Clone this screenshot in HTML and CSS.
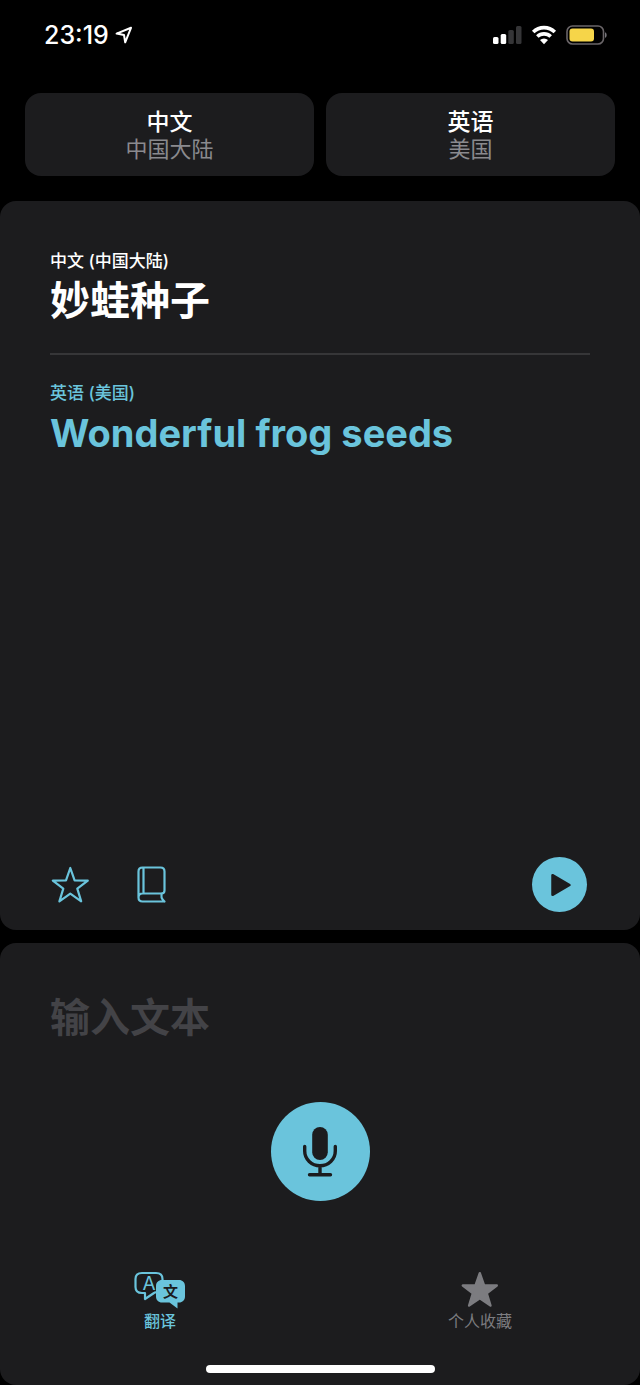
FILE: index.html
```html
<!DOCTYPE html>
<html lang="zh-CN">
<head>
<meta charset="utf-8">
<meta name="viewport" content="width=device-width, initial-scale=1">
<title>翻译</title>
<link rel="stylesheet" href="styles.css">
</head>
<body>
<div class="app">
  <header class="status">
    <div class="status-left">
      <time class="clock">23:19</time>
      <svg class="location" width="18" height="18" viewBox="0 0 18 18" aria-hidden="true"><path d="M16 1.800 1.600 7.600 9 9 10.200 16.300Z" fill="none" stroke="#fff" stroke-width="2" stroke-linejoin="round"/></svg>
    </div>
    <div class="status-right">
      <svg width="30" height="20" viewBox="0 0 30 20" aria-hidden="true">
        <rect x="1" y="12" width="5.500" height="7" rx="1.500" fill="#fff"/>
        <rect x="8.700" y="9" width="5.500" height="10" rx="1.500" fill="#fff"/>
        <rect x="16.300" y="5" width="5.500" height="14" rx="1.500" fill="#353537"/>
        <rect x="24" y="1" width="5.500" height="18" rx="1.500" fill="#353537"/>
      </svg>
      <svg width="26" height="20" viewBox="0 0 26 20" aria-hidden="true">
        <path d="M2.200 7A15.500 15.500 0 0 1 23.800 7" fill="none" stroke="#fff" stroke-width="3.600"/>
        <path d="M6.300 11.500A9.800 9.800 0 0 1 19.700 11.500" fill="none" stroke="#fff" stroke-width="3.600"/>
        <path d="M13 19.300 9 15.100A5.800 5.800 0 0 1 17 15.100Z" fill="#fff"/>
      </svg>
      <svg width="42" height="20" viewBox="0 0 42 20" aria-hidden="true">
        <rect x="1" y="1" width="36.500" height="18" rx="5.500" fill="none" stroke="#6a6568" stroke-width="1.600"/>
        <rect x="3.500" y="3.500" width="24.500" height="13" rx="3" fill="#f6d549"/>
        <path d="M39 7.200C41.200 8 41.200 12 39 12.800Z" fill="#77757a"/>
      </svg>
    </div>
  </header>

  <div class="languages">
    <button class="language" type="button"><span class="language-name">中文</span><span class="language-region">中国大陆</span></button>
    <button class="language" type="button"><span class="language-name">英语</span><span class="language-region">美国</span></button>
  </div>

  <main class="card result">
    <section>
      <p class="label">中文 (中国大陆)</p>
      <h1 class="phrase">妙蛙种子</h1>
    </section>
    <hr class="divider">
    <section class="translated">
      <p class="label">英语 (美国)</p>
      <h2 class="phrase phrase-latin" lang="en">Wonderful frog seeds</h2>
    </section>
    <div class="actions">
      <button class="icon-button" type="button" aria-label="收藏">
        <svg width="40" height="40" viewBox="0 0 40 40"><path d="M20.300 3 24.600 15.400 37.800 15.700 27.300 23.700 31.200 36.300 20.300 28.700 9.400 36.300 13.300 23.700 2.800 15.700 16 15.400Z" fill="none" stroke="currentColor" stroke-width="2.200" stroke-linejoin="round"/></svg>
      </button>
      <button class="icon-button" type="button" aria-label="词典">
        <svg width="32" height="40" viewBox="0 0 32 40"><path d="M29.500 36.500H7.500C5 36.500 3.500 35 3.500 32.500V6.500C3.500 4 5 2.500 7.500 2.500H25.500C28 2.500 29.500 4 29.500 6.500V25.500C29.500 27.500 28.500 28.500 26.500 28.500H7.500C5 28.500 3.500 29.700 3.500 32.500M8.500 2.500V28.500M27 28.500C25.800 31 26.500 34 29.500 36.500" fill="none" stroke="currentColor" stroke-width="2.200" stroke-linecap="round" stroke-linejoin="round"/></svg>
      </button>
      <button class="play" type="button" aria-label="播放">
        <svg width="24" height="26" viewBox="0 0 24 26"><path d="M4.500 3.200V22.800L21.500 13Z" fill="currentColor" stroke="currentColor" stroke-width="2.500" stroke-linejoin="round"/></svg>
      </button>
    </div>
  </main>

  <footer class="card composer">
    <input class="entry" type="text" placeholder="输入文本" aria-label="输入文本">
    <button class="mic" type="button" aria-label="语音输入">
      <svg width="40" height="52" viewBox="0 0 40 52"><rect x="12.200" y="1" width="15.600" height="33" rx="7.800" fill="currentColor"/><path d="M4.700 20.500V25A15.300 14.800 0 0 0 35.300 25V20.500M20 40V48.500M9.500 48.700H30.500" fill="none" stroke="currentColor" stroke-width="3.400" stroke-linecap="round"/></svg>
    </button>
    <nav class="tabs">
      <a class="tab tab-active" href="#translate" aria-current="page">
        <svg width="52" height="38" viewBox="0 0 52 38" aria-hidden="true">
          <path d="M22 21 20 22 11 28V22H8C4 22 1.500 20 1.500 16V8C1.500 4 4 2 8 2H22C26 2 28.500 4 28.500 8V9" fill="none" stroke="currentColor" stroke-width="2.200" stroke-linejoin="round"/>
          <text class="glyph-latin" x="15" y="19" text-anchor="middle">A</text>
          <path d="M28 9H45C48.500 9 51 11.500 51 15V25.500C51 29 48.500 31.500 45 31.500H43.500V37.500L35.500 31.500H28C24.500 31.500 22 29 22 25.500V15C22 11.500 24.500 9 28 9Z" fill="currentColor"/>
          <text class="glyph-han" x="36.500" y="26" text-anchor="middle">文</text>
        </svg>
        <span>翻译</span>
      </a>
      <a class="tab" href="#favorites">
        <svg width="40" height="38" viewBox="0 0 40 38" aria-hidden="true"><path d="M19.800 2.200 24 14.100 36.800 14.500 26.700 22.200 30.500 34.500 19.800 27.200 9.100 34.500 12.900 22.200 2.800 14.500 15.600 14.100Z" fill="currentColor" stroke="currentColor" stroke-width="2.400" stroke-linejoin="round"/></svg>
        <span>个人收藏</span>
      </a>
    </nav>
    <div class="home-bar"></div>
  </footer>
</div>
</body>
</html>
```
FILE: styles.css
```css
:root {
  --surface: #1c1c1e;
  --accent: #6ac4dc;
  --muted: #8a8a8e;
}

* {
  box-sizing: border-box;
}

body {
  margin: 0;
  background: #000;
  color: #fff;
  font-family: Inter, "Noto Sans CJK SC", sans-serif;
}

button,
input {
  margin: 0;
  padding: 0;
  border: 0;
  background: none;
  color: inherit;
  font: inherit;
}

svg {
  display: block;
}

.app {
  display: flex;
  flex-direction: column;
  min-height: 100vh;
}

.status {
  display: flex;
  justify-content: space-between;
  align-items: flex-start;
  padding: 20px 32px 43px 44px;
}

.status-left,
.status-right {
  display: flex;
  align-items: center;
  height: 30px;
}

.status-left {
  gap: 6px;
}

.status-right {
  gap: 9px;
}

.clock {
  font-size: 25px;
  font-weight: 500;
  line-height: 30px;
}

.languages {
  display: grid;
  grid-template-columns: 1fr 1fr;
  gap: 12px;
  padding: 0 25px;
}

.language {
  display: flex;
  flex-direction: column;
  align-items: center;
  padding: 15px 12px 14px;
  border-radius: 16px;
  background: var(--surface);
}

.language-name {
  font-size: 23px;
  font-weight: 500;
  line-height: 28px;
}

.language-region {
  color: var(--muted);
  font-size: 22px;
  font-weight: 400;
  line-height: 26px;
}

.card {
  display: flex;
  flex-direction: column;
  border-radius: 16px;
  background: var(--surface);
}

.result {
  flex: 1;
  margin-top: 25px;
  padding: 49px 50px 18px;
}

.label {
  margin: 0;
  font-size: 17px;
  font-weight: 500;
  line-height: 22px;
}

.phrase {
  margin: 2px 0 0;
  font-size: 40px;
  font-weight: 700;
  line-height: 54px;
}

.phrase-latin {
  font-size: 38px;
}

.divider {
  width: 100%;
  height: 2px;
  margin: 25px 0 27px;
  border: 0;
  background: #363638;
}

.translated {
  color: var(--accent);
}

.actions {
  display: flex;
  align-items: center;
  gap: 45px;
  margin-top: auto;
  padding-right: 3px;
  color: var(--accent);
}

.play {
  display: grid;
  place-items: center;
  width: 55px;
  height: 55px;
  margin-left: auto;
  border-radius: 50%;
  background: var(--accent);
  color: var(--surface);
}

.composer {
  margin-top: 13px;
  padding: 47px 0 12px;
}

.entry {
  height: 54px;
  margin: 0 50px;
  font-size: 40px;
  font-weight: 700;
  outline: 0;
}

.entry::placeholder {
  color: #434347;
  opacity: 1;
}

.mic {
  display: grid;
  place-items: center;
  align-self: center;
  width: 99px;
  height: 99px;
  margin-top: 58px;
  border-radius: 50%;
  background: var(--accent);
  color: var(--surface);
}

.tabs {
  display: grid;
  grid-template-columns: 1fr 1fr;
  margin-top: 70px;
}

.tab {
  display: flex;
  flex-direction: column;
  align-items: center;
  color: #7c7c80;
  font-size: 16px;
  font-weight: 400;
  line-height: 24px;
  text-decoration: none;
}

.tab-active {
  color: var(--accent);
  font-weight: 500;
}

.glyph-latin {
  fill: currentColor;
  font-size: 19px;
  font-weight: 400;
}

.glyph-han {
  fill: var(--surface);
  font-size: 15px;
  font-weight: 700;
}

.home-bar {
  align-self: center;
  width: 229px;
  height: 8px;
  margin-top: 32px;
  border-radius: 4px;
  background: #fff;
}
```
